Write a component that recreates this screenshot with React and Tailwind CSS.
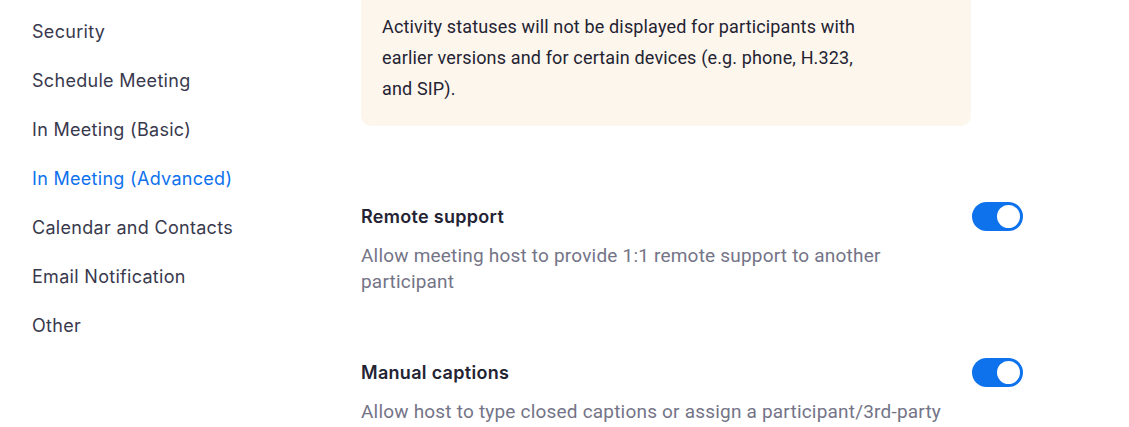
const navItems = [
  "Security",
  "Schedule Meeting",
  "In Meeting (Basic)",
  "In Meeting (Advanced)",
  "Calendar and Contacts",
  "Email Notification",
  "Other",
];

function Toggle() {
  return (
    <div className="flex h-[29px] w-[51px] shrink-0 items-center justify-end rounded-full bg-[#0e72ed] p-[1px]">
      <div className="h-[27px] w-[27px] rounded-full border-2 border-[#0e72ed] bg-white" />
    </div>
  );
}

function Setting({ title, desc }) {
  return (
    <div className="flex items-start justify-between">
      <div className="w-[600px]">
        <div className="font-['Inter',sans-serif] text-[18px] font-semibold leading-[30px] tracking-[0.3px] text-[#232333]">
          {title}
        </div>
        <p className="mt-[11px] text-[19px] leading-[26px] tracking-[0.2px] text-[#747487]">{desc}</p>
      </div>
      <Toggle />
    </div>
  );
}

export default function App() {
  return (
    <div className="flex h-[427px] w-[1129px] overflow-hidden bg-white font-['Roboto',sans-serif]">
      <nav className="w-[361px] shrink-0 pl-[32px] pt-[19px] font-['Inter',sans-serif]">
        {navItems.map((item) => (
          <div
            key={item}
            className={
              "h-[49px] text-[18px] leading-[26px] tracking-[0.3px] " +
              (item === "In Meeting (Advanced)" ? "text-[#0e72ed]" : "text-[#39394d]")
            }
          >
            {item}
          </div>
        ))}
      </nav>
      <main className="w-[662px]">
        <div className="-mt-[10px] w-[610px] rounded-[10px] bg-[#fdf6ec] pb-[22px] pl-[21px] pt-[21px] text-[18px] leading-[31px] tracking-[0.15px] text-[#232333]">
          <p className="w-[500px]">
            Activity statuses will not be displayed for participants with earlier versions and for certain
            devices (e.g. phone, H.323, and SIP).
          </p>
        </div>
        <div className="mt-[76px]">
          <Setting
            title="Remote support"
            desc="Allow meeting host to provide 1:1 remote support to another participant"
          />
        </div>
        <div className="mt-[63px]">
          <Setting
            title="Manual captions"
            desc="Allow host to type closed captions or assign a participant/3rd-party"
          />
        </div>
      </main>
    </div>
  );
}
